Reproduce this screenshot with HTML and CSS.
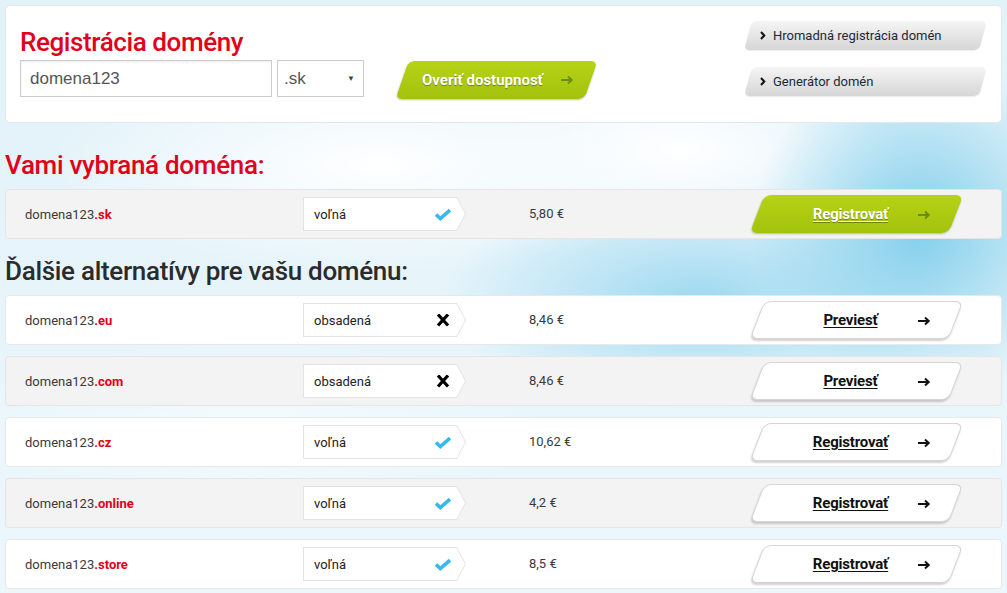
FILE: index.html
```html
<!DOCTYPE html>
<html lang="sk">
<head>
<meta charset="utf-8">
<title>Registrácia domény</title>
<link rel="stylesheet" href="styles.css">
</head>
<body>
<div class="page">
  <section class="search-card">
    <div class="search">
      <h1 class="title">Registrácia domény</h1>
      <div class="search-form">
        <input class="domain-input" type="text" value="domena123">
        <div class="tld-select"><span>.sk</span><span class="caret">&#9660;</span></div>
        <a class="btn btn-green btn-check" href="#">
          <span class="btn-label">Overiť dostupnosť</span>
          <svg class="arrow" width="14" height="10" viewBox="0 0 14 10"><path d="M1 5h10.5M8 1.5l3.7 3.5L8 8.5" stroke="currentColor" stroke-width="2" fill="none"/></svg>
        </a>
      </div>
    </div>
    <nav class="side-links">
      <a class="side-link" href="#"><svg class="chev" width="6" height="9" viewBox="0 0 6 9"><path d="M1 1l3.3 3.5L1 8" stroke="currentColor" stroke-width="2" fill="none"/></svg>Hromadná registrácia domén</a>
      <a class="side-link" href="#"><svg class="chev" width="6" height="9" viewBox="0 0 6 9"><path d="M1 1l3.3 3.5L1 8" stroke="currentColor" stroke-width="2" fill="none"/></svg>Generátor domén</a>
    </nav>
  </section>

  <h2 class="section-title red">Vami vybraná doména:</h2>
  <div class="row grey">
    <div class="domain">domena123<b>.sk</b></div>
    <div class="status"><span>voľná</span><svg class="ico" width="18" height="13" viewBox="0 0 18 13"><path d="M2 6.5l4.3 4L16 2.2" stroke="#38b9ee" stroke-width="3.6" fill="none"/></svg></div>
    <div class="price">5,80 €</div>
    <a class="btn btn-green btn-row" href="#"><span class="btn-label">Registrovať</span><svg class="arrow" width="14" height="10" viewBox="0 0 14 10"><path d="M1 5h10.5M8 1.5l3.7 3.5L8 8.5" stroke="currentColor" stroke-width="2" fill="none"/></svg></a>
  </div>

  <h2 class="section-title">Ďalšie alternatívy pre vašu doménu:</h2>
  <div class="rows">
    <div class="row">
      <div class="domain">domena123<b>.eu</b></div>
      <div class="status"><span>obsadená</span><svg class="ico" width="18" height="13" viewBox="0 0 18 13"><path d="M4 0.5l10 11M14 0.5l-10 11" stroke="#000" stroke-width="3.2" fill="none"/></svg></div>
      <div class="price">8,46 €</div>
      <a class="btn btn-white btn-row" href="#"><span class="btn-label">Previesť</span><svg class="arrow" width="14" height="10" viewBox="0 0 14 10"><path d="M1 5h10.5M8 1.5l3.7 3.5L8 8.5" stroke="currentColor" stroke-width="2" fill="none"/></svg></a>
    </div>
    <div class="row grey">
      <div class="domain">domena123<b>.com</b></div>
      <div class="status"><span>obsadená</span><svg class="ico" width="18" height="13" viewBox="0 0 18 13"><path d="M4 0.5l10 11M14 0.5l-10 11" stroke="#000" stroke-width="3.2" fill="none"/></svg></div>
      <div class="price">8,46 €</div>
      <a class="btn btn-white btn-row" href="#"><span class="btn-label">Previesť</span><svg class="arrow" width="14" height="10" viewBox="0 0 14 10"><path d="M1 5h10.5M8 1.5l3.7 3.5L8 8.5" stroke="currentColor" stroke-width="2" fill="none"/></svg></a>
    </div>
    <div class="row">
      <div class="domain">domena123<b>.cz</b></div>
      <div class="status"><span>voľná</span><svg class="ico" width="18" height="13" viewBox="0 0 18 13"><path d="M2 6.5l4.3 4L16 2.2" stroke="#38b9ee" stroke-width="3.6" fill="none"/></svg></div>
      <div class="price">10,62 €</div>
      <a class="btn btn-white btn-row" href="#"><span class="btn-label">Registrovať</span><svg class="arrow" width="14" height="10" viewBox="0 0 14 10"><path d="M1 5h10.5M8 1.5l3.7 3.5L8 8.5" stroke="currentColor" stroke-width="2" fill="none"/></svg></a>
    </div>
    <div class="row grey">
      <div class="domain">domena123<b>.online</b></div>
      <div class="status"><span>voľná</span><svg class="ico" width="18" height="13" viewBox="0 0 18 13"><path d="M2 6.5l4.3 4L16 2.2" stroke="#38b9ee" stroke-width="3.6" fill="none"/></svg></div>
      <div class="price">4,2 €</div>
      <a class="btn btn-white btn-row" href="#"><span class="btn-label">Registrovať</span><svg class="arrow" width="14" height="10" viewBox="0 0 14 10"><path d="M1 5h10.5M8 1.5l3.7 3.5L8 8.5" stroke="currentColor" stroke-width="2" fill="none"/></svg></a>
    </div>
    <div class="row">
      <div class="domain">domena123<b>.store</b></div>
      <div class="status"><span>voľná</span><svg class="ico" width="18" height="13" viewBox="0 0 18 13"><path d="M2 6.5l4.3 4L16 2.2" stroke="#38b9ee" stroke-width="3.6" fill="none"/></svg></div>
      <div class="price">8,5 €</div>
      <a class="btn btn-white btn-row" href="#"><span class="btn-label">Registrovať</span><svg class="arrow" width="14" height="10" viewBox="0 0 14 10"><path d="M1 5h10.5M8 1.5l3.7 3.5L8 8.5" stroke="currentColor" stroke-width="2" fill="none"/></svg></a>
    </div>
  </div>
</div>
</body>
</html>
```

FILE: styles.css
```css
* { box-sizing: border-box; }

html, body { height: 100%; }

body {
  margin: 0;
  font-family: Roboto, "Noto Sans", sans-serif;
  color: #333;
  background-color: #dff1f9;
  background-image:
    radial-gradient(ellipse 170px 170px at 920px 230px, rgba(120, 203, 234, 0.9), rgba(120, 203, 234, 0)),
    radial-gradient(ellipse 260px 110px at 700px 300px, rgba(140, 210, 238, 0.8), rgba(140, 210, 238, 0)),
    radial-gradient(ellipse 330px 110px at 380px 165px, #ffffff, rgba(255, 255, 255, 0)),
    radial-gradient(ellipse 220px 90px at 680px 150px, #ffffff, rgba(255, 255, 255, 0)),
    radial-gradient(ellipse 300px 90px at 250px 430px, #f4fbfe, rgba(244, 251, 254, 0)),
    linear-gradient(#e1f2f9, #ecf7fc);
}

.page {
  padding: 5px;
  width: 1007px;
}

a { text-decoration: none; color: inherit; }

/* ---------- search card ---------- */
.search-card {
  display: flex;
  justify-content: space-between;
  align-items: flex-start;
  height: 118px;
  padding: 15px 14px 0 14px;
  background: #fff;
  border: 1px solid #e4e8ea;
  border-radius: 5px;
}

.search { padding-top: 6px; }

.title {
  margin: 0 0 3px 0;
  font-size: 26px;
  line-height: 30px;
  font-weight: 500;
  color: #e2001a;
  letter-spacing: -0.4px;
}

.search-form {
  display: flex;
  align-items: flex-start;
}

.domain-input {
  width: 252px;
  height: 37px;
  margin: 0;
  padding: 0 9px;
  border: 1px solid #cccccc;
  box-shadow: inset 0 1px 2px rgba(0, 0, 0, 0.08);
  font-family: "Liberation Sans", Arial, sans-serif;
  font-size: 17px;
  color: #555;
  outline: none;
}

.tld-select {
  width: 87px;
  height: 37px;
  margin-left: 5px;
  padding: 0 6px 0 6px;
  border: 1px solid #cccccc;
  display: flex;
  align-items: center;
  justify-content: space-between;
  font-family: "Liberation Sans", Arial, sans-serif;
  font-size: 17px;
  color: #555;
  background: #fff;
}

.caret { font-size: 8px; color: #444; padding-right: 2px; }

/* ---------- skewed buttons ---------- */
.btn {
  position: relative;
  isolation: isolate;
  display: flex;
  align-items: center;
}

.btn::before {
  content: "";
  position: absolute;
  inset: 0;
  z-index: -1;
  border-radius: 7px;
  transform: skewX(-21deg);
}

.btn-green::before {
  background: linear-gradient(#b7d316, #a3c20d);
  box-shadow: 0 1px 2px rgba(0, 0, 0, 0.25);
}

.btn-green {
  color: #fff;
  text-shadow: 0 1px 1px rgba(0, 0, 0, 0.35);
}

.btn-green .arrow { color: #6d8d0c; }

.btn-white::before {
  background: #fff;
  border: 1px solid #d6d6d6;
  box-shadow: 0 2px 2px rgba(0, 0, 0, 0.18);
}

.btn-white { color: #111; }

.btn-check {
  width: 189px;
  height: 38px;
  margin: 1px 0 0 38px;
  padding: 0 17px 0 20px;
  justify-content: space-between;
  font-size: 15px;
  font-weight: 700;
}

.btn-check::before { transform: skewX(-19deg); border-radius: 6px; }

.btn-row {
  width: 199px;
  height: 38px;
  padding: 0 25px 0 27px;
  font-size: 15px;
  font-weight: 700;
}

.btn-row .btn-label {
  flex: 1;
  text-align: center;
  text-decoration: underline;
  text-underline-offset: 2px;
  letter-spacing: -0.2px;
}

.btn-row .arrow { margin-top: 1px; }

/* ---------- side links ---------- */
.side-links {
  display: flex;
  flex-direction: column;
  gap: 17px;
  padding-right: 4px;
}

.side-link {
  position: relative;
  isolation: isolate;
  display: flex;
  align-items: center;
  width: 235px;
  height: 29px;
  padding-left: 12px;
  font-size: 13px;
  color: #1b2a3a;
}

.side-link::before {
  content: "";
  position: absolute;
  inset: 0;
  z-index: -1;
  border-radius: 5px;
  transform: skewX(-15deg);
  background: linear-gradient(#f5f5f5, #d6d6d6);
  box-shadow: 0 1px 1px rgba(0, 0, 0, 0.08);
}

.chev { margin-right: 7px; color: #111; }

/* ---------- results ---------- */
.section-title {
  margin: 17px 0 9px 0;
  font-size: 26px;
  line-height: 30px;
  font-weight: 500;
  color: #2b2b2b;
  letter-spacing: -0.3px;
}

.section-title.red {
  margin-top: 27px;
  color: #e2001a;
}

.rows {
  display: flex;
  flex-direction: column;
  gap: 11px;
}

.row {
  display: grid;
  grid-template-columns: 278px 226px 228px 199px;
  align-items: center;
  height: 50px;
  padding-left: 19px;
  background: #fff;
  border: 1px solid #e8e8e8;
  border-radius: 4px;
}

.row.grey {
  background: #f3f3f3;
  border-color: #e5e5e5;
}

.domain {
  font-size: 13px;
  color: #3a3a3a;
}

.domain b {
  color: #e2001a;
  font-weight: 700;
}

.status {
  position: relative;
  isolation: isolate;
  display: flex;
  align-items: center;
  justify-content: space-between;
  width: 163px;
  height: 34px;
  padding: 0 14px 0 11px;
  font-size: 13px;
  color: #222;
}

.status::before,
.status::after {
  content: "";
  position: absolute;
  z-index: -1;
}

.status::before {
  inset: 0;
  background: #e3e3e3;
  clip-path: polygon(0 0, 154px 0, 163px 17px, 154px 34px, 0 34px);
}

.status::after {
  inset: 1px;
  background: #fff;
  clip-path: polygon(0 0, 152.5px 0, 161px 16px, 152.5px 32px, 0 32px);
}

.price {
  font-size: 13px;
  color: #3a3a3a;
  margin-top: -1px;
}
```
